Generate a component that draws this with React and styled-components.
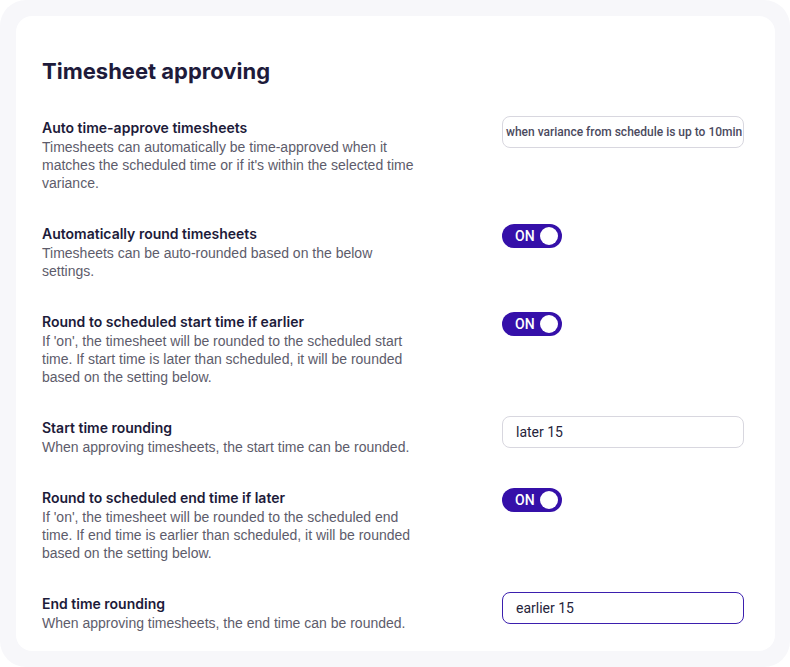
import styled, { createGlobalStyle } from "styled-components";

const GlobalStyle = createGlobalStyle`
  html, body {
    margin: 0;
    padding: 0;
    background: #ffffff;
  }
  * {
    box-sizing: border-box;
  }
`;

const Page = styled.div`
  width: 100vw;
  height: 100vh;
  padding: 16px 15px 16px 16px;
  background: #f7f7fa;
  border-radius: 26px;
  display: flex;
`;

const Card = styled.div`
  flex: 1;
  background: #ffffff;
  border-radius: 16px;
  padding: 40px 31px 0 26px;
  display: flex;
  flex-direction: column;
  gap: 32px;
`;

const Title = styled.h1`
  margin: 0;
  font-family: Inter, "Noto Sans", sans-serif;
  font-size: 22px;
  line-height: 30px;
  font-weight: 700;
  color: #1e1b3b;
`;

const Row = styled.div`
  display: grid;
  grid-template-columns: 1fr 242px;
  align-items: start;
`;

const Text = styled.div`
  max-width: 385px;
`;

const Label = styled.div`
  font-family: Inter, "Noto Sans", sans-serif;
  font-size: 14px;
  line-height: 20px;
  font-weight: 600;
  color: #1d1b3a;
`;

const Desc = styled.div`
  font-family: "Liberation Sans", Arial, sans-serif;
  font-size: 14px;
  line-height: 18px;
  color: #5d5c6b;
`;

const Select = styled.div`
  height: 32px;
  margin-top: -2px;
  border: 1px solid ${(p) => (p.$focused ? "#3b1fae" : "#d8d7df")};
  border-radius: 8px;
  display: flex;
  align-items: center;
  padding-left: ${(p) => (p.$compact ? "3px" : "13px")};
  font-family: Roboto, "Noto Sans", sans-serif;
  font-size: ${(p) => (p.$compact ? "12px" : "14px")};
  font-weight: ${(p) => (p.$compact ? 500 : 400)};
  color: ${(p) => (p.$compact ? "#4b4a5e" : "#26243b")};
  white-space: nowrap;
  overflow: hidden;
`;

const Toggle = styled.div`
  width: 60px;
  height: 24px;
  border-radius: 12px;
  background: #3510a9;
  display: flex;
  align-items: center;
  justify-content: space-between;
  padding: 0 4px 0 13px;
  font-family: Roboto, "Noto Sans", sans-serif;
  font-size: 14px;
  font-weight: 500;
  color: #ffffff;
`;

const Knob = styled.span`
  width: 18px;
  height: 18px;
  border-radius: 50%;
  background: #ffffff;
`;

const settings = [
  {
    label: "Auto time-approve timesheets",
    desc: "Timesheets can automatically be time-approved when it matches the scheduled time or if it's within the selected time variance.",
    select: "when variance from schedule is up to 10min",
    compact: true,
  },
  {
    label: "Automatically round timesheets",
    desc: "Timesheets can be auto-rounded based on the below settings.",
    toggle: true,
  },
  {
    label: "Round to scheduled start time if earlier",
    desc: "If 'on', the timesheet will be rounded to the scheduled start time. If start time is later than scheduled, it will be rounded based on the setting below.",
    toggle: true,
  },
  {
    label: "Start time rounding",
    desc: "When approving timesheets, the start time can be rounded.",
    select: "later 15",
  },
  {
    label: "Round to scheduled end time if later",
    desc: "If 'on', the timesheet will be rounded to the scheduled end time. If end time is earlier than scheduled, it will be rounded based on the setting below.",
    toggle: true,
  },
  {
    label: "End time rounding",
    desc: "When approving timesheets, the end time can be rounded.",
    select: "earlier 15",
    focused: true,
  },
];

const App = () => {
  return (
    <>
      <GlobalStyle />
      <Page>
        <Card>
          <Title>Timesheet approving</Title>
          {settings.map((s) => (
            <Row key={s.label}>
              <Text>
                <Label>{s.label}</Label>
                <Desc>{s.desc}</Desc>
              </Text>
              {s.toggle ? (
                <Toggle>
                  ON
                  <Knob />
                </Toggle>
              ) : (
                <Select $compact={s.compact} $focused={s.focused}>
                  {s.select}
                </Select>
              )}
            </Row>
          ))}
        </Card>
      </Page>
    </>
  );
};

export default App;
